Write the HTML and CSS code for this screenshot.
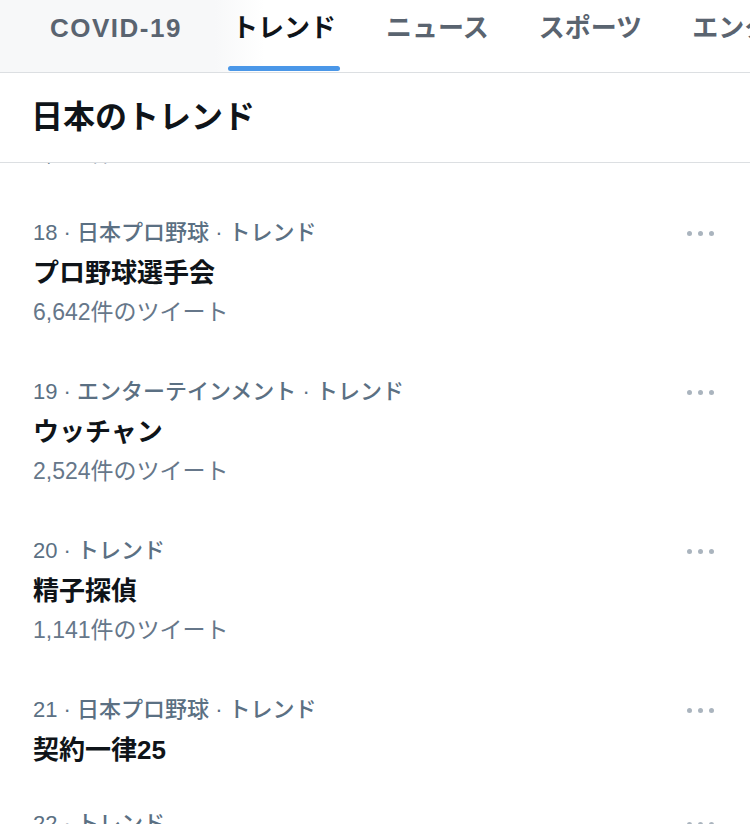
FILE: index.html
```html
<!DOCTYPE html>
<html lang="ja">
<head>
    <meta charset="UTF-8">
    <meta name="viewport" content="width=device-width, initial-scale=1.0">
    <title>日本のトレンド</title>
    <link rel="stylesheet" href="styles.css">
</head>
<body>
    <nav class="tabs">
        <a class="tab tab-en">COVID-19</a>
        <a class="tab active">トレンド</a>
        <a class="tab">ニュース</a>
        <a class="tab">スポーツ</a>
        <a class="tab">エンターテイメント</a>
    </nav>

    <h1 class="section-title">日本のトレンド</h1>

    <div class="list-view">
        <ul class="trends">
            <li class="trend">
                <div class="trend-body">
                    <div class="trend-meta">17 · トレンド</div>
                    <div class="trend-name">ドラフト会議</div>
                    <div class="trend-count">1,487件のツイート</div>
                </div>
                <span class="more"><i></i><i></i><i></i></span>
            </li>
            <li class="trend">
                <div class="trend-body">
                    <div class="trend-meta">18 · 日本プロ野球 · トレンド</div>
                    <div class="trend-name">プロ野球選手会</div>
                    <div class="trend-count">6,642件のツイート</div>
                </div>
                <span class="more"><i></i><i></i><i></i></span>
            </li>
            <li class="trend">
                <div class="trend-body">
                    <div class="trend-meta">19 · エンターテインメント · トレンド</div>
                    <div class="trend-name">ウッチャン</div>
                    <div class="trend-count">2,524件のツイート</div>
                </div>
                <span class="more"><i></i><i></i><i></i></span>
            </li>
            <li class="trend">
                <div class="trend-body">
                    <div class="trend-meta">20 · トレンド</div>
                    <div class="trend-name">精子探偵</div>
                    <div class="trend-count">1,141件のツイート</div>
                </div>
                <span class="more"><i></i><i></i><i></i></span>
            </li>
            <li class="trend no-count">
                <div class="trend-body">
                    <div class="trend-meta">21 · 日本プロ野球 · トレンド</div>
                    <div class="trend-name">契約一律25</div>
                </div>
                <span class="more"><i></i><i></i><i></i></span>
            </li>
            <li class="trend">
                <div class="trend-body">
                    <div class="trend-meta">22 · トレンド</div>
                    <div class="trend-name">ハロウィン</div>
                    <div class="trend-count">3,908件のツイート</div>
                </div>
                <span class="more"><i></i><i></i><i></i></span>
            </li>
        </ul>
    </div>
</body>
</html>
```

FILE: styles.css
```css
:root {
    --text-color: #0f1419;
    --sub-color: #5b7083;
    --line-color: #dcdfe2;
    --accent-color: #4a97e8;
}

html, body {
    margin: 0;
    padding: 0;
}

body {
    width: 750px;
    height: 824px;
    overflow: hidden;
    font-family: "Liberation Sans", "Noto Sans CJK JP", sans-serif;
    color: var(--text-color);
    background: #fff;
}

/* タブ */
.tabs {
    display: flex;
    height: 72px;
    padding-left: 25px;
    border-bottom: 1px solid var(--line-color);
    background: linear-gradient(to right, #f7f8f9 0, #f7f8f9 215px, #fff 265px);
    white-space: nowrap;
    overflow: hidden;
}

.tab {
    position: relative;
    flex: none;
    padding: 0 25px;
    line-height: 56px;
    font-size: 26px;
    font-weight: bold;
    color: #5a6470;
}

.tab-en {
    letter-spacing: 1.5px;
}

.tab.active {
    color: var(--text-color);
}

.tab.active::after {
    content: "";
    position: absolute;
    left: 21px;
    right: 21px;
    bottom: 1px;
    height: 5px;
    border-radius: 3px;
    background: var(--accent-color);
}

.section-title {
    margin: 0;
    height: 89px;
    line-height: 89px;
    padding-left: 31px;
    font-size: 32px;
    font-weight: bold;
    border-bottom: 1px solid var(--line-color);
}

/* トレンド一覧 */
.list-view {
    overflow: hidden;
}

.trends {
    list-style: none;
    margin: -129px 0 0;
    padding: 0;
}

.trend {
    display: flex;
    justify-content: space-between;
    align-items: flex-start;
    padding: 20px 36px 20px 33px;
}

.trend.no-count {
    padding-bottom: 14px;
}

.trend-meta {
    font-size: 22px;
    font-weight: 500;
    line-height: 40px;
    color: var(--sub-color);
}

.trend-name {
    font-size: 26px;
    font-weight: bold;
    line-height: 40px;
}

.trend-count {
    font-size: 23px;
    line-height: 39px;
    color: #66778a;
}

.more {
    display: flex;
    gap: 6px;
    height: 40px;
    align-items: center;
}

.more i {
    width: 5px;
    height: 5px;
    border-radius: 50%;
    background: #aab4be;
}
```
